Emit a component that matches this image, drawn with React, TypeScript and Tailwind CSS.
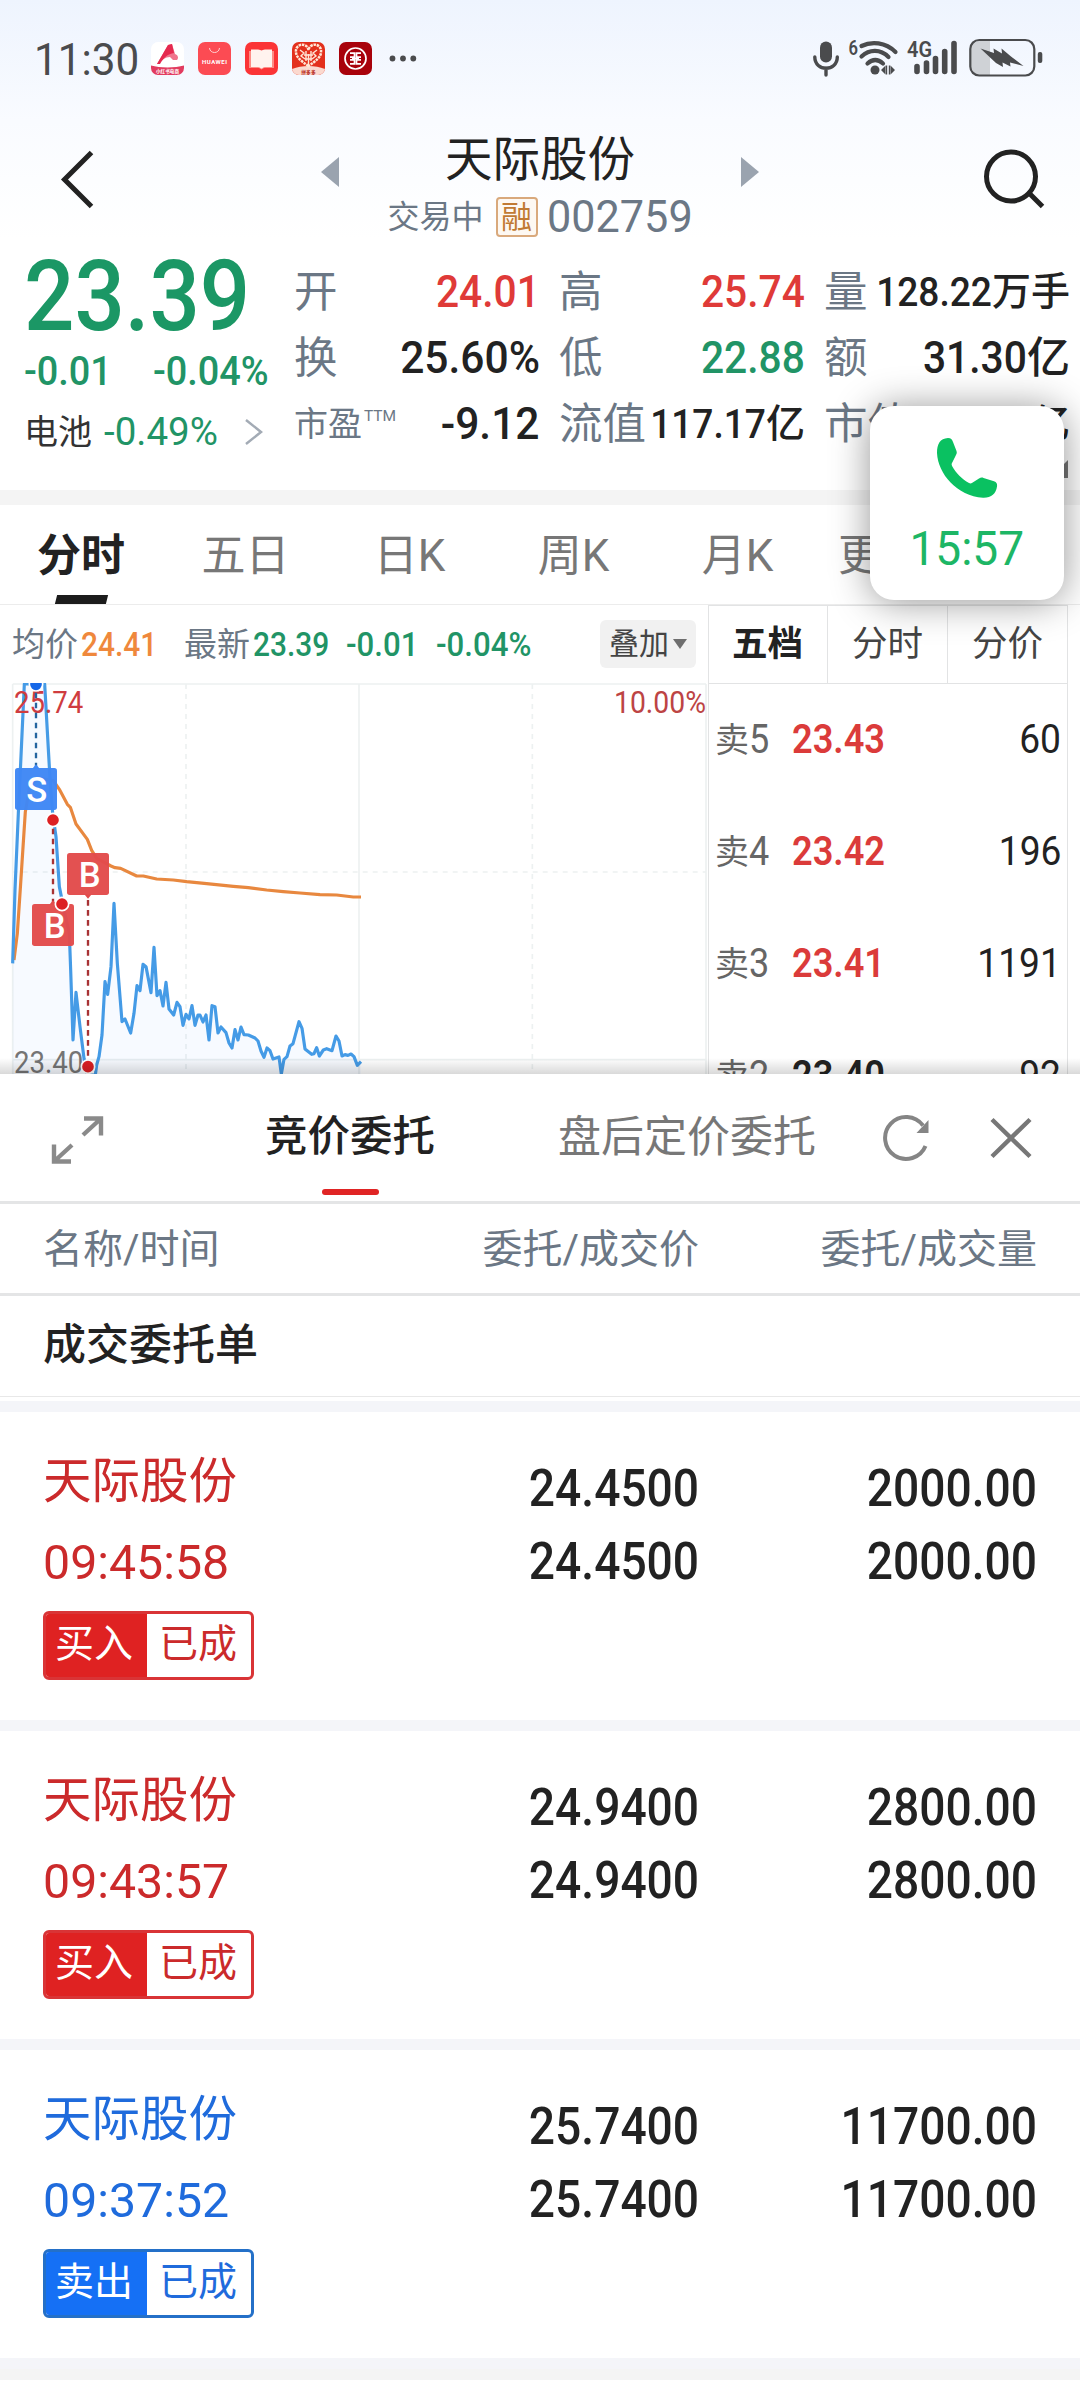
import type { ReactNode } from 'react';
import clsx from 'clsx';

const FONT = "font-[Roboto,'Noto_Sans_CJK_SC',sans-serif]";

// 数字使用偏窄的字形,带负号或百分号的稍宽
const Num = ({ children, className, wide }: { children: ReactNode; className?: string; wide?: boolean }) => (
  <span className={clsx('inline-block whitespace-nowrap font-medium', wide ? 'scale-x-[.945]' : 'scale-x-[.905]', className)}>
    {children}
  </span>
);

const StatusBar = () => (
  <div className="flex h-[118px] items-start pt-[38px] text-[#4a4b4d]">
    <div className="ml-[34px] h-[44px] w-[117px] text-[44px] leading-[44px]">
      <span className="inline-block origin-left scale-x-[.96]">11:30</span>
    </div>
    <div className="mt-[4px] flex gap-[14px]">
      <svg width="33" height="33" viewBox="0 0 33 33">
        <rect width="33" height="33" rx="7" fill="#fff" />
        <path d="M0 23.5c9 2.500 24 2.500 33 0V26a7 7 0 0 1-7 7H7a7 7 0 0 1-7-7z" fill="#e23b5f" />
        <path d="M17 3l4-1 3 10c3 1 4 4 2 6h-4l-3-3c-5 0-8 3-11 7h-2z" fill="#f0738c" />
        <path d="M17 3l4-1 2 9c-6 1-10 4-14 11H6z" fill="#e5294f" />
        <text x="16.5" y="31" textAnchor="middle" fontSize="4.600" fontWeight="700" fill="#fff">小红书电商</text>
      </svg>
      <svg width="33" height="33" viewBox="0 0 33 33">
        <rect width="33" height="33" rx="7" fill="#fc4b53" />
        <path d="M11.5 6c.4 6 9.600 6 10 0" fill="none" stroke="#ffd0d0" strokeWidth="1" />
        <text x="16.500" y="21.500" textAnchor="middle" fontSize="6" fontWeight="700" fill="#fff" textLength="25">HUAWEI</text>
      </svg>
      <svg width="33" height="33" viewBox="0 0 33 33">
        <rect width="33" height="33" rx="7" fill="#fb3436" />
        <path d="M4 9h25v17H19l-2.500 1.500L14 26H4z" fill="#fd8d86" />
        <path d="M6 7.500h7c2 0 2.500 1 3.500 1s1.500-1 3.500-1h7V25h-7c-2 0-2.500 1.500-3.500 1.500S15 25 13 25H6z" fill="#fff3ee" />
      </svg>
      <svg width="33" height="33" viewBox="0 0 33 33">
        <rect width="33" height="33" rx="7" fill="#e3301c" />
        <path d="M0 27c10-4 23-4 33 0a7 7 0 0 1-7 6H7a7 7 0 0 1-7-6z" fill="#fbd9cf" />
        <path d="M16.500 24C9 19 4 15 4 10a6 6 0 0 1 12.500-2A6 6 0 0 1 29 10c0 5-5 9-12.500 14z" fill="none" stroke="#ffe6d6" strokeWidth="2.500" strokeDasharray="2.500 .8" />
        <path d="M8 8l4 3-3 3 4 3M25 8l-4 3 3 3-4 3M14 9v10M19 9v10M16.500 12v13M12 13h9M13 17h7" fill="none" stroke="#ffe6d6" strokeWidth="1.400" />
        <text x="16.500" y="31.500" textAnchor="middle" fontSize="4.800" fontWeight="700" fill="#b5271a">拼多多</text>
      </svg>
      <svg width="33" height="33" viewBox="0 0 33 33">
        <rect width="33" height="33" rx="7" fill="#a8020b" />
        <circle cx="16.500" cy="16.500" r="10.500" fill="none" stroke="#fff" strokeWidth="1.700" />
        <path d="M11 11.200h4.500v4h-4.500M22 11.200h-4.500v4h4.500M11 21.800h4.500v-4h-4.500M22 21.800h-4.500v-4h4.500M13 16.500h7" fill="none" stroke="#fff" strokeWidth="1.700" />
      </svg>
    </div>
    <svg className="ml-[17px] mt-[17px]" width="28" height="7" viewBox="0 0 28 7">
      <circle cx="3.500" cy="3.500" r="2.900" fill="#4a4b4d" />
      <circle cx="14" cy="3.500" r="2.900" fill="#4a4b4d" />
      <circle cx="24.300" cy="3.500" r="2.900" fill="#4a4b4d" />
    </svg>
    <svg className="ml-auto mr-[36px]" width="232" height="42" viewBox="812 38 232 42" fill="none">
      {/* mic */}
      <rect x="820" y="41.500" width="12" height="21" rx="6" fill="#4a4b4d" />
      <path d="M814.800 57c0 15 22.500 15 22.500 0M826 68v7" stroke="#4a4b4d" strokeWidth="3.400" strokeLinecap="round" />
      {/* wifi */}
      <text x="848.500" y="55" fontSize="20" fontWeight="600" fill="#4a4b4d" textLength="9.500" lengthAdjust="spacingAndGlyphs">6</text>
      <path d="M861.500 46c10-5 24-4 34 6M861.500 56.500c8-7.500 19-7.500 27 0.500M867.500 63.500c5-4.500 10.500-4.500 15.500 0" stroke="#4a4b4d" strokeWidth="4.200" strokeLinecap="round" />
      <circle cx="875" cy="70" r="4.500" fill="#4a4b4d" />
      <path d="M881 70l4.500-4.500v9zM890.500 65.500l4.500 4.500-4.500 4.500z" fill="#4a4b4d" />
      <path d="M886.500 65.500v9M889.500 65.500v9" stroke="#4a4b4d" strokeWidth="1.400" />
      {/* signal */}
      <text x="907" y="56.500" fontSize="22" fontWeight="600" fill="#4a4b4d" textLength="25" lengthAdjust="spacingAndGlyphs">4G</text>
      <path d="M917 66.500v5M926.500 63v8.500M935.500 58.500v13M944.700 51.500v20M954 43.500v28" stroke="#4a4b4d" strokeWidth="5.600" strokeLinecap="round" />
      {/* battery */}
      <path d="M980 41h10v34h-10a9 9 0 0 1-9-9V50a9 9 0 0 1 9-9z" fill="#cfd2d6" />
      <rect x="970.300" y="40" width="64" height="35.500" rx="9" stroke="#4a4b4d" strokeWidth="2.200" />
      <rect x="1037.800" y="52" width="4.500" height="11" rx="2" fill="#4a4b4d" />
      <path d="M980.500 48.500l13.500 4.500-.5-4.500 8.500 5-.5-5 9.500 8 0-4-0 4 12.500 9.500-13.500-3.500.5 4-8-4 .5 4.500-7-4z" fill="#4a4b4d" />
    </svg>
  </div>
);

const Header = () => (
  <div className="flex h-[122px]">
    <svg className="ml-[60px] mt-[31px]" width="36" height="60" viewBox="0 0 36 60">
      <path d="M31.500 3.500L4.500 30.500l27 27" fill="none" stroke="#222" strokeWidth="5" />
    </svg>
    <svg className="ml-[225px] mt-[39px]" width="18" height="30" viewBox="0 0 18 30">
      <path d="M18 0v30L0 15z" fill="#9aa3af" />
    </svg>
    <div className="flex w-[402px] flex-col items-center">
      <div className="mt-[12px] text-[47.500px] leading-[60px] text-[#222]">天际股份</div>
      <div className="mt-[3px] flex h-[47px] items-center pr-[2px] text-[#6b7785]">
        <span className="text-[32px] leading-[46px]">交易中</span>
        <span className="ml-[12px] h-[40px] w-[42px] rounded-[4px] border-2 border-[#d9a97c] bg-[#fdf8f2] text-center text-[31px] leading-[37px] text-[#c17a33]">融</span>
        <span className="ml-[9px] w-[144px] text-[45px] leading-[46px]">
          <span className="inline-block origin-left scale-x-[.96]">002759</span>
        </span>
      </div>
    </div>
    <svg className="mt-[39px]" width="18" height="30" viewBox="0 0 18 30">
      <path d="M0 0v30l18-15z" fill="#9aa3af" />
    </svg>
    <svg className="ml-auto mr-[34px] mt-[29px]" width="64" height="64" viewBox="0 0 64 64">
      <circle cx="29" cy="29.500" r="24.500" fill="none" stroke="#222" strokeWidth="5" />
      <path d="M47.500 46.500l13 13" stroke="#222" strokeWidth="5" />
    </svg>
  </div>
);

type Metric = { label: string; value: string; unit?: string; color?: string; small?: boolean; ttm?: boolean };

const METRICS: Metric[] = [
  { label: '开', value: '24.01', color: 'text-[#df3a38]' },
  { label: '高', value: '25.74', color: 'text-[#df3a38]' },
  { label: '量', value: '128.22', unit: '万手', small: true },
  { label: '换', value: '25.60%' },
  { label: '低', value: '22.88', color: 'text-[#219466]' },
  { label: '额', value: '31.30', unit: '亿' },
  { label: '市盈', value: '-9.12', ttm: true },
  { label: '流值', value: '117.17', unit: '亿', small: true },
  { label: '市值', value: '117.17', unit: '亿', small: true },
];

const MetricCell = ({ label, value, unit, color, small, ttm }: Metric) => (
  <div className="flex h-[66px] items-center whitespace-nowrap leading-[66px]">
    {ttm ? (
      <span className="flex text-[34px] text-[#6b7785]">
        {label}
        <span className="-mt-[8px] ml-[2px] text-[15.500px]">TTM</span>
      </span>
    ) : (
      <span className="w-[44px] shrink-0 pt-[2px] text-[43.500px] text-[#6b7785]">{label}</span>
    )}
    <span className={clsx('flex min-w-0 flex-1 justify-end', color ?? 'text-[#222]', small ? 'text-[41px]' : 'text-[45px]')}>
      <Num className="origin-right" wide={/[-%]/.test(value)}>{value}</Num>
      {unit && <span className={clsx('font-medium', small ? 'text-[39px]' : 'text-[43px]')}>{unit}</span>}
    </span>
  </div>
);

const Quote = () => (
  <div className="flex h-[250px]">
    <div className="w-[294px] pl-[24px]">
      <div className="h-[114px] text-[98px] leading-[114px] text-[#1b9765]">
        <Num className="origin-left">23.39</Num>
      </div>
      <div className="flex text-[40px] leading-[36px] text-[#219466]">
        <Num className="w-[129px] origin-left" wide>-0.01</Num>
        <Num className="origin-left" wide>-0.04%</Num>
      </div>
      <div className="mt-[18px] flex h-[48px] items-center text-[34px] leading-[48px] text-[#333]">
        电池
        <span className="ml-[12px] w-[128px] text-[38.500px] text-[#219466]">
          <span className="inline-block origin-left">-0.49%</span>
        </span>
        <svg className="ml-[12px]" width="20" height="28" viewBox="0 0 20 28">
          <path d="M2 2l15 12L2 26" fill="none" stroke="#a3abb5" strokeWidth="2.500" />
        </svg>
      </div>
    </div>
    <div className="relative grid w-[776px] grid-cols-3 content-start gap-x-[19px] pt-[19px]">
      {METRICS.map((m) => (
        <MetricCell key={m.label} {...m} />
      ))}
      <svg className="absolute bottom-[12px] right-[2px]" width="18" height="18" viewBox="0 0 18 18">
        <path d="M18 0v18H0z" fill="#777" />
      </svg>
    </div>
  </div>
);

const PERIODS = ['五日', '日K', '周K', '月K'];

const PeriodTabs = () => (
  <div className="flex h-[100px] border-b border-[#ececec] text-[44px] leading-[103px] text-[#777]">
    <div className="relative w-[164px] pr-[2px] text-center font-bold text-[#222]">
      分时
      <div className="absolute bottom-0 left-[56px] h-[9px] w-[51px] -skew-x-[14deg] bg-[#1c1c1c]" />
    </div>
    {PERIODS.map((p) => (
      <div key={p} className="w-[164px] pr-[1px] text-center">{p}</div>
    ))}
    <div className="pl-[18px]">更多</div>
  </div>
);

const PRICE =
  '38,880 45,660 55,430 62,280 73,42 134,42 148,290 151,340 158,430 168,500 178,650 190,710 208,790 212,900 219,1110 228,967 240,1070 252,1165 262,1215 286,1215 290,1185 297,1160 306,1095 315,935 323,973 333,890 342,700 352,880 366,1055 375,1047 392,1089 402,1030 411,947 420,962 429,883 438,890 453,968 462,832 471,977 480,962 489,1008 498,937 507,1017 521,1035 531,997 540,1010 549,1066 558,1033 567,1047 576,1007 585,1066 594,1035 600,1035 609,1056 618,1035 627,1110 636,1007 645,1010 654,1089 663,1071 678,1088 687,1119 696,1134 705,1079 714,1110 723,1071 732,1094 745,1095 765,1104 774,1113 783,1143 792,1162 801,1134 810,1142 819,1167 837,1161 844,1212 852,1168 861,1160 870,1128 879,1121 897,1055 906,1075 915,1137 935,1153 942,1151 950,1133 958,1158 970,1140 980,1136 996,1142 1008,1098 1017,1113 1026,1158 1035,1154 1044,1156 1053,1152 1062,1160 1072,1186 1083,1175';
const AVERAGE =
  '42,870 52,790 62,640 76,425 90,345 120,325 160,332 178,358 202,403 211,412 228,462 262,508 275,541 290,565 333,588 345,593 362,595 410,618 430,618 470,627 520,630 560,635 620,641 700,649 745,653 800,660 850,665 900,669 960,674 1010,675 1060,681 1083,681';

const Chart = () => (
  <svg className="block" width="708" height="391" viewBox="0 39 2124 1173" fill="none">
    <g stroke="#edf1f1" strokeWidth="5">
      <path d="M38 42H2118M38 42V1212M1077 42V1212M2118 42V1212M38 1169H2118" />
      <path d="M558 42V1212M1597 42V1212M38 606H2118" strokeDasharray="15 15" />
    </g>
    <polygon points={`38,1215 ${PRICE} 1083,1215`} fill="#3f8ff5" fillOpacity=".045" />
    <polyline points={AVERAGE} stroke="#e8883f" strokeWidth="9.500" strokeLinejoin="round" />
    <polyline points={PRICE} stroke="#459be6" strokeWidth="9.500" strokeLinejoin="round" />
    <g fontSize="92">
      <text x="42" y="129" fill="#cf3c3f" textLength="208" lengthAdjust="spacingAndGlyphs">25.74</text>
      <text x="2118" y="129" fill="#bd4444" textAnchor="end" textLength="276" lengthAdjust="spacingAndGlyphs">10.00%</text>
      <text x="42" y="1208" fill="#757575" textLength="208" lengthAdjust="spacingAndGlyphs">23.40</text>
    </g>
    <g strokeWidth="7" strokeDasharray="17 13">
      <path d="M108 68V290" stroke="#24659f" />
      <path d="M159 476V700" stroke="#a83234" />
      <path d="M264 690V1170" stroke="#a83234" />
    </g>
    <g stroke="#fff" strokeWidth="5">
      <circle cx="108" cy="43" r="20" fill="#1768e8" />
      <circle cx="159" cy="450" r="20" fill="#dc2023" />
    </g>
    <path d="M97 296l11-13 11 13z" fill="#4088f5" />
    <rect x="45" y="294" width="126" height="126" rx="8" fill="#3f87f5" fillOpacity=".97" />
    <path d="M148 704l11-13 11 13z" fill="#e24b4b" />
    <rect x="96" y="702" width="126" height="126" rx="8" fill="#e24b4b" fillOpacity=".97" />
    <path d="M253 673l11 13 11-13z" fill="#e24b4b" />
    <rect x="201" y="549" width="126" height="126" rx="8" fill="#e24b4b" fillOpacity=".97" />
    <g fontSize="104" fontWeight="500" fill="#fff" textAnchor="middle">
      <text x="110" y="395">S</text>
      <text x="164" y="803">B</text>
      <text x="269" y="650">B</text>
    </g>
    <g stroke="#fff" strokeWidth="5" fill="#dc2023">
      <circle cx="186" cy="702" r="20" />
      <circle cx="264" cy="1190" r="20" />
    </g>
  </svg>
);

const ASKS = [
  { name: '卖5', price: '23.43', qty: '60', color: 'text-[#db3b3a]' },
  { name: '卖4', price: '23.42', qty: '196', color: 'text-[#db3b3a]' },
  { name: '卖3', price: '23.41', qty: '1191', color: 'text-[#db3b3a]' },
  { name: '卖2', price: '23.40', qty: '92', color: 'text-[#222]' },
];

const Market = () => (
  <div className="flex h-[469px] overflow-hidden">
    <div className="w-[708px]">
      <div className="flex h-[78px] items-center pl-[12px] text-[33px] leading-[79px] text-[#6b7785]">
        均价
        <Num className="ml-[3px] w-[103px] origin-left text-[#ef883c]">24.41</Num>
        最新
        <Num className="ml-[3px] w-[93px] origin-left text-[#219466]">23.39</Num>
        <Num className="w-[90px] origin-left text-[#219466]" wide>-0.01</Num>
        <Num className="w-[120px] origin-left text-[#219466]" wide>-0.04%</Num>
        <div className="ml-auto mr-[12px] flex h-[48px] w-[96px] items-center rounded-[6px] bg-[#f1f1f1] pl-[9px] text-[30px] leading-[46px] text-[#444]">
          叠加
          <svg className="ml-[4px]" width="14" height="10" viewBox="0 0 14 10">
            <path d="M0 0h14L7 10z" fill="#6e6e6e" />
          </svg>
        </div>
      </div>
      <Chart />
    </div>
    <div className="w-[360px] border-x border-t border-[#e2e3e4]">
      <div className="flex h-[78px] border-b border-[#e2e3e4] text-center text-[35.500px] leading-[77px] text-[#444]">
        <div className="w-[119px] border-r border-[#e2e3e4] pr-[1px] font-bold text-[#222]">五档</div>
        <div className="w-[120px] border-r border-[#e2e3e4]">分时</div>
        <div className="w-[119px]">分价</div>
      </div>
      {ASKS.map((a) => (
        <div key={a.name} className="flex h-[112px] items-center pl-[6px] pr-[6px] text-[40px] leading-[110px]">
          <span className="flex w-[77px] text-[#666]">
            <span className="text-[34px]">{a.name[0]}</span>
            <span className="inline-block origin-left scale-x-90">{a.name[1]}</span>
          </span>
          <Num className={clsx('origin-left font-semibold', a.color)}>{a.price}</Num>
          <span className="ml-auto inline-block origin-right scale-x-[.93] text-[#222]">{a.qty}</span>
        </div>
      ))}
    </div>
  </div>
);

const SheetHeader = () => (
  <>
    <div className="flex h-[130px] items-start border-b-[3px] border-[#e4e5e6]">
      <svg className="ml-[50px] mt-[40px]" width="56" height="52" viewBox="0 0 56 52" fill="none" stroke="#8a8a8a" strokeWidth="4.400">
        <path d="M34 4.500h17v17M51 4.500L33 21M4 30.500v17h17M4 47.500L22 31" />
      </svg>
      <div className="relative ml-[159px] h-[127px] text-[42.500px] font-medium leading-[126px] text-[#222]">
        竞价委托
        <div className="absolute bottom-[6px] left-[57px] h-[6px] w-[57px] rounded-[3px] bg-[#e02424]" />
      </div>
      <div className="ml-[123px] text-[43px] leading-[126px] text-[#777]">盘后定价委托</div>
      <svg className="ml-[66px] mt-[38px]" width="50" height="52" viewBox="0 0 50 52">
        <path d="M43.500 34A21 21 0 1 1 41 13.500" fill="none" stroke="#858585" strokeWidth="4" />
        <path d="M46.500 8v13H34.500z" fill="#858585" />
      </svg>
      <svg className="ml-[57px] mt-[43px]" width="44" height="42" viewBox="0 0 44 42">
        <path d="M3 2.500l38 37M41 2.500l-38 37" stroke="#777" strokeWidth="4.400" />
      </svg>
    </div>
    <div className="flex h-[92px] border-b-[3px] border-[#e4e5e6] pl-[43px] pr-[43px] text-[40px] leading-[91px] text-[#6b7785]">
      <span className="w-[300px]">名称/时间</span>
      <span className="w-[356px] text-right">委托/成交价</span>
      <span className="ml-auto">委托/成交量</span>
    </div>
    <div className="h-[101px] border-b border-[#e8e8e8] pl-[43px] text-[43px] font-medium leading-[98px] text-[#222]">成交委托单</div>
    <div className="h-[4px]" />
  </>
);

const ORDERS = [
  { time: '09:45:58', side: 'buy', price: '24.4500', qty: '2000.00' },
  { time: '09:43:57', side: 'buy', price: '24.9400', qty: '2800.00' },
  { time: '09:37:52', side: 'sell', price: '25.7400', qty: '11700.00' },
];

const OrderCard = ({ time, side, price, qty }: (typeof ORDERS)[number]) => {
  const buy = side === 'buy';
  return (
    <div className="flex h-[319px] border-t-[11px] border-[#f4f5f9] pl-[43px] pr-[43px]">
      <div className={clsx('w-[300px]', buy ? 'text-[#cb2a2b]' : 'text-[#1f6bdc]')}>
        <div className="mt-[40px] text-[48.500px] leading-[60px]">天际股份</div>
        <div className="mt-[21px] text-[49px] leading-[60px]">
          <span className="inline-block origin-left scale-x-[.985]">{time}</span>
        </div>
        <div
          className={clsx(
            'mt-[18px] flex h-[69px] w-[211px] overflow-hidden rounded-[6px] border-[3px] text-center text-[39px] leading-[60px]',
            buy ? 'border-[#d93436]' : 'border-[#2470c8]',
          )}
        >
          <span className={clsx('-my-[3px] -ml-[3px] w-[104px] pr-[2px] pt-[3px] text-white', buy ? 'bg-[#df2222]' : 'bg-[#1570f5]')}>
            {buy ? '买入' : '卖出'}
          </span>
          <span className="flex-1 pr-[2px]">已成</span>
        </div>
      </div>
      <div className="flex w-[356px] flex-col items-end pt-[40px] text-[51px] leading-[73px] text-[#222]">
        <Num className="origin-right">{price}</Num>
        <Num className="origin-right">{price}</Num>
      </div>
      <div className="ml-auto flex flex-col items-end pt-[40px] text-[51px] leading-[73px] text-[#222]">
        <Num className="origin-right">{qty}</Num>
        <Num className="origin-right">{qty}</Num>
      </div>
    </div>
  );
};

const CallBubble = () => (
  <div className="absolute left-[870px] top-[406px] flex h-[194px] w-[194px] flex-col items-center rounded-[24px] bg-white shadow-[0_2px_38px_rgba(0,0,0,0.42)]">
    <svg className="mt-[31px]" width="62" height="62" viewBox="0 0 62 62">
      <path
        d="M1 16C1 7 4 1.500 12 1c3 0 4 1.500 5 4l3.500 9c.8 2-.2 3.500-1 5L16 26c-.6 1.200-.4 2 .2 3.200C20 36 26 42 33 46c1.300.7 2.200.4 3.300-.3L43 41.500c1.500-1 3-1.200 4.500-.6l10.500 3.400c2.500.9 3.500 2.500 3 5.200C60 57 55 61 47 60.700 21 59 2 37 1 16z"
        fill="#0ac161"
      />
    </svg>
    <div className="mt-[19px] text-[48px] leading-[62px] text-[#1db665]">
      <span className="inline-block scale-x-[.96]">15:57</span>
    </div>
  </div>
);

const App = () => {
  return (
    <div className={clsx('relative h-[2400px] w-[1080px] overflow-hidden bg-white', FONT)}>
      <div className="bg-linear-to-b from-[#eef4fe] via-[#f9fbff] to-white">
        <StatusBar />
        <Header />
      </div>
      <Quote />
      <div className="h-[15px] bg-[#f4f4f4]" />
      <PeriodTabs />
      <div className="relative">
        <Market />
        <div className="absolute inset-x-0 bottom-0 h-[16px] bg-linear-to-b from-transparent to-black/15" />
      </div>
      <SheetHeader />
      {ORDERS.map((o) => (
        <OrderCard key={o.time} {...o} />
      ))}
      <div className="h-[11px] bg-[#f4f5f9]" />
      <div className="h-[11px] bg-[#f4f4f4]" />
      <CallBubble />
    </div>
  );
};

export default App;
